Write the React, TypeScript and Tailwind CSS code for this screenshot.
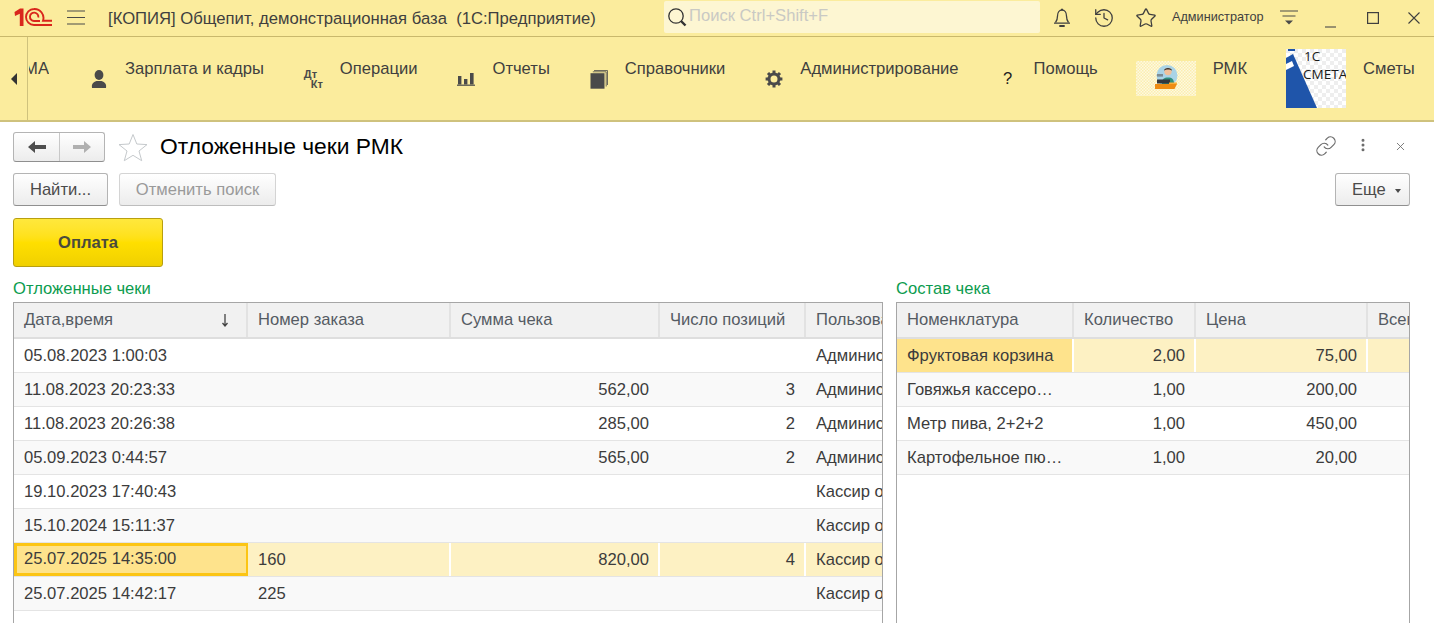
import { History, Star, Link, EllipsisVertical, X } from "lucide-react";

const font = { fontFamily: '"Liberation Sans", Arial, sans-serif' };

type Row = { cells: string[]; current?: boolean };

const leftCols = [
  { title: "Дата,время", w: "w-[234px]", right: false },
  { title: "Номер заказа", w: "w-[203px]", right: false },
  { title: "Сумма чека", w: "w-[209px]", right: true },
  { title: "Число позиций", w: "w-[146px]", right: true },
  { title: "Пользоват", w: "w-[100px]", right: false },
];

const leftRows: Row[] = [
  { cells: ["05.08.2023 1:00:03", "", "", "", "Админист"] },
  { cells: ["11.08.2023 20:23:33", "", "562,00", "3", "Админист"] },
  { cells: ["11.08.2023 20:26:38", "", "285,00", "2", "Админист"] },
  { cells: ["05.09.2023 0:44:57", "", "565,00", "2", "Админист"] },
  { cells: ["19.10.2023 17:40:43", "", "", "", "Кассир ос"] },
  { cells: ["15.10.2024 15:11:37", "", "", "", "Кассир ос"] },
  { cells: ["25.07.2025 14:35:00", "160", "820,00", "4", "Кассир ос"], current: true },
  { cells: ["25.07.2025 14:42:17", "225", "", "", "Кассир ос"] },
];

const rightCols = [
  { title: "Номенклатура", w: "w-[177px]", right: false },
  { title: "Количество", w: "w-[122px]", right: true },
  { title: "Цена", w: "w-[172px]", right: true },
  { title: "Всего", w: "w-[80px]", right: true },
];

const rightRows: Row[] = [
  { cells: ["Фруктовая корзина", "2,00", "75,00", ""], current: true },
  { cells: ["Говяжья кассеро…", "1,00", "200,00", ""] },
  { cells: ["Метр пива, 2+2+2", "1,00", "450,00", ""] },
  { cells: ["Картофельное пю…", "1,00", "20,00", ""] },
];

function Logo() {
  return (
    <svg width="38" height="18" viewBox="0 0 38 18" fill="none" className="shrink-0">
      <path d="M0.5 4 L6 0.5 H9.5 V18 H5.8 V5.8 L1 8 Z" fill="#d9261c" />
      <path d="M38 17 H20 A8 8 0 0 1 20 1 A9 9 0 0 1 29 12.8 H38" stroke="#d9261c" strokeWidth="1.9" />
      <path d="M24.3 9.5 A4.2 4.2 0 1 0 20 13 H26" stroke="#d9261c" strokeWidth="1.9" />
    </svg>
  );
}

function BellIcon() {
  return (
    <svg width="18" height="20" viewBox="0 0 18 20" fill="none" stroke="#3f3f3f" strokeWidth="1.3" className="shrink-0">
      <path d="M2.5 14.5 C4.2 12.5 4.5 10.5 4.5 8 C4.5 4.5 6.5 2 9 2 C11.5 2 13.5 4.5 13.5 8 C13.5 10.5 13.8 12.5 15.5 14.5" />
      <path d="M8 1.5 H10 M1 15.2 H17" />
      <path d="M6.3 18 H11.7" strokeWidth="2" />
    </svg>
  );
}

function PersonIcon() {
  return (
    <svg width="18" height="20" viewBox="0 0 18 20" fill="#4a4a4a">
      <ellipse cx="9" cy="6" rx="4.4" ry="5" />
      <path d="M2 19 C1.4 14.5 3 13.5 6.5 12 H11.5 C15 13.5 16.6 14.5 16 19 Z" />
    </svg>
  );
}

function ChartIcon() {
  return (
    <svg width="18" height="14" viewBox="0 0 18 14" fill="#4a4a4a">
      <rect x="1" y="4" width="3.4" height="8.5" />
      <rect x="7" y="7" width="3.4" height="5.5" />
      <rect x="13" y="1" width="3.6" height="11.5" />
      <rect x="0" y="12.6" width="18" height="1.2" />
    </svg>
  );
}

function BooksIcon() {
  return (
    <svg width="18" height="20" viewBox="0 0 18 20" fill="none">
      <path d="M4 1.5 H17.5 V16 M2.8 2.8 H16.2 V17.5" stroke="#4a4a4a" strokeWidth="0.8" />
      <rect x="0.5" y="4.2" width="14" height="15.5" fill="#4a4a4a" />
    </svg>
  );
}

function GearIcon() {
  return (
    <svg width="18" height="18" viewBox="0 0 18 18" fill="none">
      <circle cx="9" cy="9" r="5" stroke="#4a4a4a" strokeWidth="3" />
      <g stroke="#4a4a4a" strokeWidth="3">
        <path d="M9 0.5 V3.5 M9 14.5 V17.5 M0.6 9 H3.6 M14.4 9 H17.4" />
        <path d="M3 3 L5.1 5.1 M12.9 12.9 L15 15 M15 3 L12.9 5.1 M5.1 12.9 L3 15" />
      </g>
    </svg>
  );
}

function RmkPicture() {
  return (
    <svg width="60" height="35" viewBox="0 0 60 35" className="shrink-0">
      <defs>
        <pattern id="chk1" width="3" height="3" patternUnits="userSpaceOnUse">
          <rect width="3" height="3" fill="#fef9e0" />
          <rect width="1.5" height="1.5" fill="#fbeeb0" />
          <rect x="1.5" y="1.5" width="1.5" height="1.5" fill="#fbeeb0" />
        </pattern>
      </defs>
      <rect width="60" height="35" fill="url(#chk1)" />
      <circle cx="31" cy="14.5" r="10.5" fill="#a9d3e6" />
      <path d="M26 22 C26 18 28 16.5 32 16.5 C36 16.5 38 18 38 23 H26 Z" fill="#2f8f7c" />
      <circle cx="32" cy="10.5" r="3.7" fill="#f0c09a" />
      <path d="M28 9.5 C28 6 36 6 36 9.5 C34 8 30 8 28 9.5 Z" fill="#33302e" />
      <rect x="21" y="18.5" width="13" height="4" fill="#33373d" />
      <rect x="21" y="13" width="6" height="2.6" fill="#7d8b93" />
      <path d="M19 23 H41 L38.5 28 H19 Z" fill="#ef8c12" />
      <rect x="33" y="21.5" width="8" height="1.5" fill="#f7b03c" />
    </svg>
  );
}

function SmetaPicture() {
  return (
    <div className="relative w-[60px] h-[59px] shrink-0 overflow-hidden">
      <svg width="60" height="59" viewBox="0 0 60 59" className="block">
        <defs>
          <pattern id="chk2" width="8" height="8" patternUnits="userSpaceOnUse">
            <rect width="8" height="8" fill="#ffffff" />
            <rect width="4" height="4" fill="#eeeeee" />
            <rect x="4" y="4" width="4" height="4" fill="#eeeeee" />
          </pattern>
        </defs>
        <rect width="60" height="59" fill="url(#chk2)" />
        <path d="M0 9 L7 5 L31 59 L0 59 Z" fill="#1f55aa" />
        <path d="M2 0 H9 V2 H2 Z" fill="#1f55aa" />
        <path d="M0 15 L6 12 L8 17 L0 21 Z" fill="#ffffff" />
      </svg>
      <span className="absolute left-[18px] top-[-2px] text-[13.5px] leading-[18px] text-[#1a1a1a]" style={{ fontFamily: '"Open Sans", sans-serif' }}>
        1C
      </span>
      <span className="absolute left-[17px] top-[16px] text-[13.5px] leading-[18px] text-[#1a1a1a]" style={{ fontFamily: '"Open Sans", sans-serif' }}>
        СМЕТА
      </span>
    </div>
  );
}

function Section({ icon, label, className }: { icon: React.ReactNode; label: string; className?: string }) {
  return (
    <div className={"flex items-center gap-[17px] shrink-0 " + (className ?? "")}>
      <div className="flex items-center justify-center shrink-0">{icon}</div>
      <span className="pb-5 text-[16.6px] leading-[18px] text-[#3f3f3f]">{label}</span>
    </div>
  );
}

function Btn({ disabled, className, children }: { disabled?: boolean; className?: string; children: React.ReactNode }) {
  return (
    <button
      className={
        disabled
          ? "h-[33px] pt-[2px] rounded-[3px] border border-[#d4d4d4] border-b-[#bdbdbd] bg-gradient-to-b from-white to-[#ececec] text-[16.6px] text-[#9a9a9a] " + (className ?? "")
          : "h-[33px] pt-[2px] rounded-[3px] border border-[#b4b4b4] border-b-[#8f8f8f] bg-gradient-to-b from-white to-[#ececec] text-[16.6px] text-[#4b4b4b] " + (className ?? "")
      }
    >
      {children}
    </button>
  );
}

function Table({ cols, rows, sortFirst }: { cols: typeof leftCols; rows: Row[]; sortFirst?: boolean }) {
  return (
    <div className="flex-1 overflow-hidden border border-b-0 border-[#a6a6a6]">
      <div className="flex h-[36px] bg-[#f1f1f1] border-b-2 border-[#dedede]">
        {cols.map((c, i) => (
          <div
            key={c.title}
            className={"flex items-center justify-between shrink-0 pl-[10px] pr-4 border-r-2 border-[#e2e2e2] text-[16.6px] text-[#555b63] whitespace-nowrap overflow-hidden " + c.w}
          >
            <span>{c.title}</span>
            {sortFirst && i === 0 && (
              <svg width="10" height="14" viewBox="0 0 10 14">
                <path d="M5 1 V12 M2.5 10 L5 13 L7.5 10" stroke="#444" strokeWidth="1.3" fill="none" />
              </svg>
            )}
          </div>
        ))}
      </div>
      {rows.map((r, ri) => (
        <div key={ri} className={"flex h-[34px] border-b border-[#e4e4e4] " + (ri % 2 === 1 ? "bg-[#f9f9f9]" : "bg-white")}>
          {cols.map((c, i) => (
            <div
              key={c.title}
              className={
                "flex items-center shrink-0 pt-[2px] text-[16.6px] text-[#3c3c3c] whitespace-nowrap overflow-hidden " +
                c.w +
                (c.right ? " justify-end" : "") +
                (r.current ? " pr-[9px] border-r-2 border-white bg-[#fdf1c3]" : " pr-[11px]") +
                (r.current && i === 0 && sortFirst ? " !bg-[#fee38c] border-[3px] !border-[#fcc514] pl-[7px] !pt-0" : " pl-[10px]") +
                (r.current && i === 0 && !sortFirst ? " !bg-[#fee38c]" : "")
              }
            >
              {r.cells[i]}
            </div>
          ))}
        </div>
      ))}
    </div>
  );
}

export default function App() {
  return (
    <div className="flex flex-col h-[623px] w-[1434px] overflow-hidden bg-white" style={font}>
      <header className="flex items-center h-[37px] bg-[#fbec9d] border-b border-[#c9b86c] shrink-0">
        <div className="ml-[14px] mb-[2px]">
          <Logo />
        </div>
        <svg width="18" height="15" viewBox="0 0 18 15" className="ml-[15px] mb-[1px] shrink-0">
          <path d="M0 1 H18 M0 7.5 H18 M0 14 H18" stroke="#4a4a4a" strokeWidth="1.2" />
        </svg>
        <span className="ml-[23px] w-[556px] text-[16.67px] text-[#3f3f3f] whitespace-pre">[КОПИЯ] Общепит, демонстрационная база  (1С:Предприятие)</span>
        <div className="flex items-center gap-[2px] h-[32px] w-[376px] rounded-[2px] bg-[#fdf6d2] pl-[3px] mb-[3px]">
          <svg width="20" height="20" viewBox="0 0 20 20" fill="none" className="shrink-0">
            <circle cx="9" cy="9" r="7.2" stroke="#333" strokeWidth="1.3" />
            <path d="M14 14 L18.5 18.5" stroke="#333" strokeWidth="2.4" />
          </svg>
          <span className="text-[16.6px] text-[#c9c9c4]">Поиск Ctrl+Shift+F</span>
        </div>
        <div className="ml-[13px]">
          <BellIcon />
        </div>
        <History size={22} strokeWidth={1.4} className="ml-[22px] shrink-0 text-[#3f3f3f]" />
        <Star size={22} strokeWidth={1.4} className="ml-[20px] shrink-0 text-[#3f3f3f]" />
        <span className="ml-[15px] text-[12.7px] text-[#3f3f3f] whitespace-nowrap">Администратор</span>
        <svg width="18" height="16" viewBox="0 0 18 16" className="ml-[16px] shrink-0">
          <path d="M0 1 H18 M2.5 6 H15.5" stroke="#4a4a4a" strokeWidth="1.2" />
          <path d="M5 10.5 H13 L9 14.5 Z" fill="#4a4a4a" />
        </svg>
        <svg width="11" height="12" viewBox="0 0 11 12" className="ml-[27px] mt-[8px] shrink-0">
          <path d="M0 11 H11" stroke="#4a4a4a" strokeWidth="1.1" />
        </svg>
        <svg width="12" height="12" viewBox="0 0 12 12" className="ml-[31px] shrink-0">
          <rect x="0.6" y="0.6" width="10.8" height="10.8" fill="none" stroke="#3f3f3f" strokeWidth="1.2" />
        </svg>
        <svg width="12" height="12" viewBox="0 0 12 12" className="ml-[29px] shrink-0">
          <path d="M0.5 0.5 L11.5 11.5 M11.5 0.5 L0.5 11.5" stroke="#3f3f3f" strokeWidth="1.1" />
        </svg>
      </header>

      <nav className="flex items-center h-[85px] bg-[#fbec9d] border-b-[2px] border-[#cfc27d] shrink-0 overflow-hidden">
        <div className="flex items-center justify-center w-[28px] h-full border-r border-[#cfc27d] shrink-0">
          <svg width="6" height="12" viewBox="0 0 6 12">
            <path d="M6 0 V12 L0 6 Z" fill="#333" />
          </svg>
        </div>
        <div className="relative ml-[1px] w-[20px] h-[18px] overflow-hidden shrink-0 mb-5 text-[16.6px] leading-[18px] text-[#3f3f3f]">
          <span className="absolute right-0 top-0 whitespace-nowrap">МА</span>
        </div>
        <div className="flex items-center gap-10 ml-[41px] shrink-0">
          <Section icon={<PersonIcon />} label="Зарплата и кадры" />
          <Section
            icon={
              <div className="relative w-[19px] h-[20px] text-[11px] leading-[10px] font-bold text-[#4a4a4a]">
                <span className="absolute left-0 top-0">Дт</span>
                <span className="absolute left-[7px] top-[10px]">Кт</span>
              </div>
            }
            label="Операции"
          />
          <Section icon={<ChartIcon />} label="Отчеты" />
          <Section icon={<BooksIcon />} label="Справочники" />
          <Section icon={<GearIcon />} label="Администрирование" />
          <Section
            icon={<div className="w-[18px] text-center text-[16.6px] leading-[18px] text-[#222]">?</div>}
            label="Помощь"
          />
          <Section icon={<RmkPicture />} label="РМК" className="-ml-[2px]" />
          <Section icon={<SmetaPicture />} label="Сметы" className="-ml-[1px]" />
        </div>
      </nav>

      <main className="flex flex-col flex-1 min-h-0 pl-[13px] pr-6">
        <div className="flex items-center h-[35px] mt-[8px] shrink-0">
          <div className="flex h-[30px] w-[92px] mb-[1px] rounded-[3px] border border-[#b4b4b4] border-b-[#8f8f8f] bg-gradient-to-b from-white to-[#ececec]">
            <div className="flex items-center justify-center w-[46px] border-r border-[#c8c8c8]">
              <svg width="18" height="12" viewBox="0 0 18 12">
                <path d="M7 0 L0 6 L7 12 V8 H18 V4 H7 Z" fill="#4e4e4e" />
              </svg>
            </div>
            <div className="flex items-center justify-center flex-1">
              <svg width="18" height="12" viewBox="0 0 18 12">
                <path d="M11 0 L18 6 L11 12 V8 H0 V4 H11 Z" fill="#b0b0b0" />
              </svg>
            </div>
          </div>
          <svg width="30" height="29" viewBox="0 0 30 29" className="ml-[13px] shrink-0">
            <path d="M15 1.5 L18.8 11 L29 11.6 L21 18 L23.7 27.7 L15 22.3 L6.3 27.7 L9 18 L1 11.6 L11.2 11 Z" fill="none" stroke="#c5c9cc" strokeWidth="1" />
          </svg>
          <h1 className="ml-[12px] mb-[2px] text-[22.8px] font-normal text-black">Отложенные чеки РМК</h1>
          <Link size={22} strokeWidth={1.3} className="ml-auto mb-[3px] text-[#6b6b6b]" />
          <EllipsisVertical size={16} strokeWidth={2.5} className="ml-[18px] mb-[5px] text-[#6b6b6b]" />
          <X size={13} strokeWidth={1.6} className="ml-[23px] mr-[3px] mb-[3px] text-[#6b6b6b]" />
        </div>

        <div className="flex items-center gap-[11px] mt-[8px] shrink-0">
          <Btn className="w-[95px]">Найти...</Btn>
          <Btn disabled className="w-[157px]">Отменить поиск</Btn>
          <Btn className="flex items-center w-[75px] ml-auto pl-4">
            <span>Еще</span>
            <svg width="6" height="4" viewBox="0 0 6 4" className="ml-[9px]">
              <path d="M0 0 H6 L3 4 Z" fill="#4b4b4b" />
            </svg>
          </Btn>
        </div>

        <button className="mt-[12px] w-[150px] h-[49px] pt-[2px] shrink-0 rounded-[3px] border border-[#b89f10] bg-gradient-to-b from-[#ffe83c] via-[#ffdf00] to-[#f0d000] text-[16.6px] font-bold text-[#4a4a3c]">
          Оплата
        </button>

        <div className="flex flex-1 min-h-0 gap-[13px] mt-[11px]">
          <div className="flex flex-col w-[870px]">
            <span className="h-[24px] pt-[2px] text-[16.6px] leading-[18px] text-[#0d9c4f]">Отложенные чеки</span>
            <Table cols={leftCols} rows={leftRows} sortFirst />
          </div>
          <div className="flex flex-col w-[514px]">
            <span className="h-[24px] pt-[2px] text-[16.6px] leading-[18px] text-[#0d9c4f]">Состав чека</span>
            <Table cols={rightCols} rows={rightRows} />
          </div>
        </div>
      </main>
    </div>
  );
}
